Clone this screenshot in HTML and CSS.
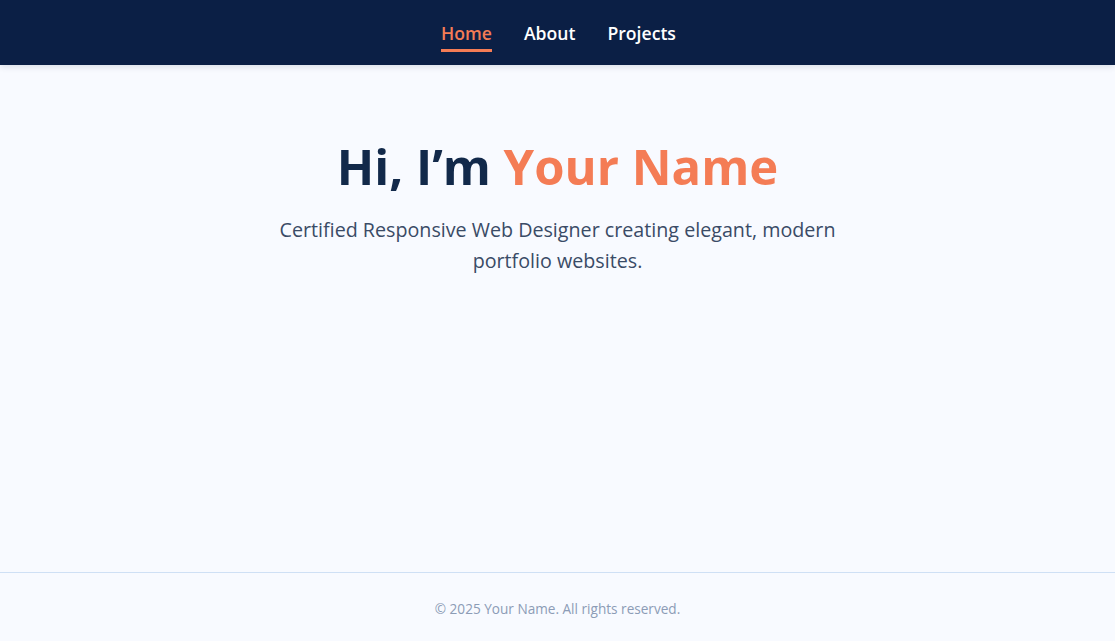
FILE: index.html
```html
<!DOCTYPE html>
<html lang="en">
<head>
<meta charset="utf-8">
<title>Your Name — Portfolio</title>
<link rel="stylesheet" href="styles.css">
</head>
<body>
<header class="site-header">
  <nav class="nav">
    <a class="nav-link active" href="#">Home</a>
    <a class="nav-link" href="#">About</a>
    <a class="nav-link" href="#">Projects</a>
  </nav>
</header>
<main class="hero">
  <h1 class="hero-title">Hi, I’m <span class="accent">Your Name</span></h1>
  <p class="hero-sub">Certified Responsive Web Designer creating elegant, modern portfolio websites.</p>
</main>
<footer class="site-footer">
  <p>© 2025 Your Name. All rights reserved.</p>
</footer>
</body>
</html>
```

FILE: styles.css
```css
* { box-sizing: border-box; }
html, body { height: 100%; }
body {
  margin: 0;
  font-family: "Segoe UI", "Open Sans", "Noto Sans", sans-serif;
  background: #f8faff;
  color: #12294a;
  display: flex;
  flex-direction: column;
  min-height: 100vh;
}
.site-header {
  background: #0b1f45;
  height: 65px;
  box-shadow: 0 2px 6px rgba(10, 31, 68, 0.12);
  display: flex;
  justify-content: center;
  position: relative;
  z-index: 1;
  padding-left: 2px;
}
.nav {
  display: flex;
  gap: 32px;
  align-items: stretch;
}
.nav-link {
  color: #ffffff;
  text-decoration: none;
  font-weight: 600;
  font-size: 17.6px;
  display: flex;
  flex-direction: column;
  justify-content: flex-start;
  padding-top: 21px;
  position: relative;
}
.nav-link.active { color: #f47c55; }
.nav-link.active::after {
  content: "";
  position: absolute;
  left: 0;
  right: 0;
  top: 49px;
  height: 3px;
  background: #f47c55;
}
.hero {
  flex: 1;
  text-align: center;
  padding: 72px 20px 0;
  display: flex;
  flex-direction: column;
  align-items: center;
}
.hero-title {
  margin: 0 0 18px;
  font-size: 49px;
  line-height: 58px;
  font-weight: 700;
  color: #12294a;
}
.accent { color: #f47c55; }
.hero-sub {
  margin: 0;
  max-width: 620px;
  font-size: 19.7px;
  line-height: 31px;
  padding-top: 1px;
  color: #3a4b66;
}
.site-footer {
  border-top: 1px solid #cfe0f5;
  text-align: center;
  padding: 26px 20px 22px;
}
.site-footer p {
  margin: 0;
  font-size: 13.6px;
  line-height: 20px;
  color: #8c9cb6;
}
```
